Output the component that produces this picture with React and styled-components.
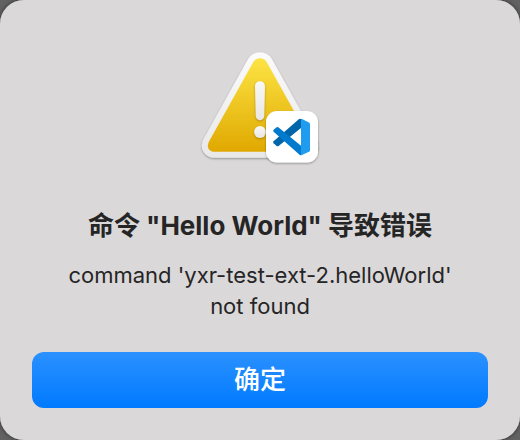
import React from "react";
import styled, { createGlobalStyle } from "styled-components";

const GlobalStyle = createGlobalStyle`
  * { box-sizing: border-box; }
  body {
    margin: 0;
    background: #626262;
    font-family: Inter, "Noto Sans CJK SC", sans-serif;
    font-optical-sizing: none;
  }
`;

const Dialog = styled.main`
  display: flex;
  flex-direction: column;
  align-items: center;
  min-height: 100vh;
  padding: 40px 32px 32px;
  border-radius: 24px;
  background: #dad8d9;
  box-shadow: inset 0 0 1px #eceaeb, 0 0 4px #2c2c2c;
  color: #262526;
`;

const AlertIcon = styled.svg`
  display: block;
  width: 140px;
  height: 130px;
`;

const Title = styled.h1`
  margin: 36px 0 0;
  font-size: 26px;
  line-height: 40px;
  font-weight: 700;
  text-align: center;
`;

const Message = styled.p`
  max-width: 400px;
  margin: 14px 0 0;
  font-size: 22px;
  line-height: 31px;
  text-align: center;
`;

const ConfirmButton = styled.button`
  width: 100%;
  height: 56px;
  margin-top: auto;
  padding: 0;
  border: 0;
  border-radius: 12px;
  background: linear-gradient(#2b91ff, #007aff);
  color: #fff;
  font: inherit;
  font-size: 26px;
  line-height: 52px;
  font-weight: 500;
`;

const triangle =
  "M253.3 62C256.2 57 263.8 57 266.7 62L311 141.5C314 147 311 151.8 305 151.8H215C209 151.8 206 147 209 141.5Z";

function WarningIcon() {
  return (
    <AlertIcon viewBox="190 40 140 130" role="img" aria-label="Visual Studio Code">
      <defs>
        <linearGradient id="yellow" x1="0" y1="0" x2="0" y2="1">
          <stop offset="0" stopColor="#fce444" />
          <stop offset="1" stopColor="#e0a800" />
        </linearGradient>
        <linearGradient id="rim" gradientUnits="userSpaceOnUse" x1="0" y1="52" x2="0" y2="158">
          <stop offset="0" stopColor="#fbfbfb" />
          <stop offset="1" stopColor="#e8e8e8" />
        </linearGradient>
        <linearGradient id="mark" x1="0" y1="0" x2="0" y2="1">
          <stop offset="0" stopColor="#f8f8f6" />
          <stop offset="1" stopColor="#e9e7e4" />
        </linearGradient>
        <filter id="soft" x="-20%" y="-20%" width="140%" height="140%">
          <feDropShadow dx="0" dy="1" stdDeviation="1" floodColor="#000" floodOpacity="0.35" />
        </filter>
        <filter id="markShadow" x="-40%" y="-20%" width="180%" height="150%">
          <feDropShadow dx="0" dy="1" stdDeviation="0.8" floodColor="#806000" floodOpacity="0.6" />
        </filter>
      </defs>
      <path d={triangle} fill="url(#rim)" stroke="url(#rim)" strokeWidth="12" strokeLinejoin="round" filter="url(#soft)" />
      <path d={triangle} fill="url(#yellow)" />
      <g fill="url(#mark)" filter="url(#markShadow)">
        <path d="M255 86.5C255 79.5 265 79.5 265 86.5L264.2 116C264.2 121.5 255.8 121.5 255.8 116Z" />
        <circle cx="260" cy="132" r="5.9" />
      </g>
      <rect x="266" y="111" width="52" height="51.5" rx="11" fill="#fff" filter="url(#soft)" />
      <path d="M301 119V128L278.6 146Q277.6 146.6 276.6 146L273.6 143.3Q272.8 142.3 273.6 141.3L298.5 119.5Q300 118.5 301 119Z" fill="#0065a9" />
      <path d="M301 145.7V155.2Q300 155.2 299 154.2L273.6 131.8Q272.8 130.8 273.6 129.8L276.6 127.2Q277.6 126.6 278.6 127.4Z" fill="#007acc" />
      <path d="M301 119Q301.5 118.8 302 119.1L309 122.4Q310 123 310 124V150.2Q310 151.2 309 151.8L302 155Q301.5 155.2 301 155.2Z" fill="#1f9cf0" />
    </AlertIcon>
  );
}

export default function App() {
  return (
    <>
      <GlobalStyle />
      <Dialog role="alertdialog" aria-labelledby="alert-title" aria-describedby="alert-message">
        <WarningIcon />
        <Title id="alert-title">命令 "Hello World" 导致错误</Title>
        <Message id="alert-message">command 'yxr-test-ext-2.helloWorld' not found</Message>
        <ConfirmButton type="button">确定</ConfirmButton>
      </Dialog>
    </>
  );
}
